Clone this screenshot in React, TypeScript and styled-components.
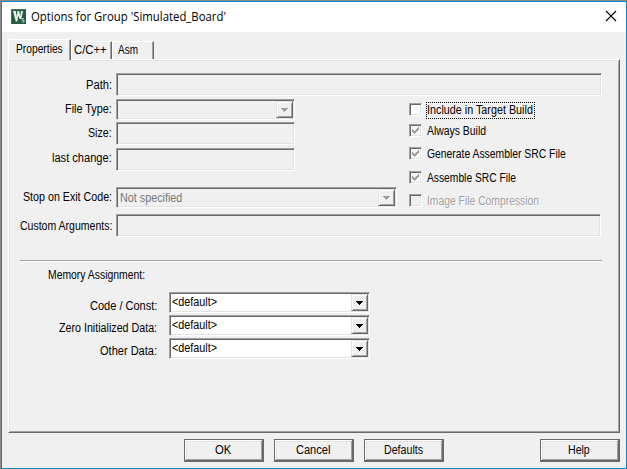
import React, { useLayoutEffect, useRef, useState } from "react";
import styled, { createGlobalStyle, css } from "styled-components";

const face = "#f0f0f0";
const light = "#e3e3e3";
const shadow = "#a0a0a0";
const dark = "#696969";

const GlobalStyle = createGlobalStyle`
  * { box-sizing: border-box; }
  body { margin: 0; overflow: hidden; }
`;

const sunken = css`
  border: 1px solid;
  border-color: ${shadow} #fff #fff ${shadow};
  box-shadow: inset 1px 1px 0 ${dark}, inset -1px -1px 0 ${light};
`;

const Window = styled.div`
  width: 627px;
  height: 469px;
  display: flex;
  flex-direction: column;
  border-style: solid;
  border-color: #8b8b8b;
  border-width: 1px 0 0 1px;
  background: ${face};
  font: 12px/14px "Liberation Sans", Arial, sans-serif;
  color: #000;
`;

const Frame = styled.div`
  flex: 1;
  display: flex;
  flex-direction: column;
  border: 1px solid #0a84cc;
`;

const TitleBar = styled.header`
  height: 30px;
  flex: none;
  display: flex;
  align-items: flex-start;
  background: #fff;
  padding: 7px 9px 0 9px;
`;

const Title = styled.h1`
  flex: 1;
  margin: 0 0 0 5px;
  font: 12px/16px "Open Sans", "Noto Sans", sans-serif;
`;

const CloseButton = styled.button`
  width: 12px;
  height: 12px;
  margin-top: 1px;
  padding: 0;
  border: 0;
  background: none;
  display: flex;
`;

const Content = styled.main`
  flex: 1;
  padding: 7px 6px 0;
  display: flex;
  flex-direction: column;
`;

const TabList = styled.div`
  height: 20px;
  display: flex;
  align-items: flex-end;
`;

const Tab = styled.div<{ $active?: boolean; $width: number; $pad: number }>`
  width: ${(p) => p.$width}px;
  height: ${(p) => (p.$active ? 21 : 18)}px;
  margin-bottom: ${(p) => (p.$active ? -1 : 0)}px;
  padding: ${(p) => (p.$active ? 2 : 1)}px 0 0 ${(p) => p.$pad}px;
  border-top: 1px solid #fff;
  border-left: 1px solid #fff;
  border-right: 1px solid ${dark};
  border-radius: 2px 1px 0 0;
  box-shadow: inset -1px 0 0 ${shadow};
  background: ${face};
  z-index: ${(p) => (p.$active ? 1 : 0)};
`;

const Panel = styled.section`
  height: 374px;
  flex: none;
  border: 1px solid;
  border-color: #fff ${dark} ${dark} #fff;
  box-shadow: inset 1px 1px 0 ${light}, inset -1px -1px 0 ${shadow};
  padding: 13px 17px 0 11px;
`;

const Columns = styled.div`
  display: flex;
  height: 115px;
`;

const Row = styled.div<{ $gap?: number }>`
  display: flex;
  margin-top: ${(p) => p.$gap ?? 0}px;
`;

const Label = styled.label<{ $width: number; $drop: number; $gap: number }>`
  width: ${(p) => p.$width}px;
  margin-right: ${(p) => p.$gap}px;
  flex: none;
  display: flex;
  justify-content: flex-end;
  padding-top: ${(p) => p.$drop}px;
`;

const Field = styled.div<{ $width: number }>`
  width: ${(p) => p.$width}px;
  height: 23px;
  ${sunken}
`;

const ComboBox = styled.div<{ $width: number; $disabled?: boolean }>`
  width: ${(p) => p.$width}px;
  height: 21px;
  display: flex;
  justify-content: space-between;
  padding: 1px 1px 1px ${(p) => (p.$disabled ? 3 : 2)}px;
  background: ${(p) => (p.$disabled ? face : "#fff")};
  color: ${(p) => (p.$disabled ? "#777" : "#000")};
  ${sunken}
`;

const ComboValue = styled.span<{ $drop: number }>`
  padding-top: ${(p) => p.$drop}px;
`;

const DropButton = styled.span`
  width: 17px;
  height: 17px;
  padding: 6px 0 0 4px;
  display: flex;
  align-items: flex-start;
  background: ${face};
  border: 1px solid;
  border-color: ${light} ${dark} ${dark} ${light};
  box-shadow: inset 1px 1px 0 #fff, inset -1px -1px 0 ${shadow};
`;

const CheckList = styled.div`
  margin-left: 12px;
  padding-top: 7px;
`;

const CheckRow = styled.label<{ $height: number; $disabled?: boolean }>`
  height: ${(p) => p.$height}px;
  display: flex;
  align-items: flex-start;
  ${(p) => p.$disabled && `color: ${shadow}; text-shadow: 1px 1px 0 #fff;`}
`;

const CheckBox = styled.span<{ $fill: string }>`
  width: 13px;
  height: 13px;
  display: flex;
  margin-right: 4px;
  background: ${(p) => p.$fill};
  ${sunken}
`;

const CheckText = styled.span<{ $focused?: boolean }>`
  height: 17px;
  margin-top: -1px;
  padding: 0 1px 0 0;
  border: 1px ${(p) => (p.$focused ? "dotted #000" : "solid transparent")};
`;

const Divider = styled.hr`
  width: 582px;
  height: 2px;
  margin: 23px 0 0;
  border: 0;
  border-top: 1px solid ${shadow};
  border-bottom: 1px solid #fff;
`;

const Heading = styled.div`
  margin: 6px 0 10px 28px;
  height: 14px;
`;

const Footer = styled.footer`
  display: flex;
  gap: 10px;
  padding: 6px 0 0 176px;
`;

const Button = styled.button<{ $far?: boolean }>`
  width: 80px;
  height: 23px;
  margin-left: ${(p) => (p.$far ? 86 : 0)}px;
  padding: 0 1px 1px 0;
  display: flex;
  align-items: center;
  justify-content: center;
  font: inherit;
  color: #000;
  background: ${face};
  border: 1px solid ${dark};
  border-right-width: 2px;
  border-bottom-width: 2px;
  box-shadow: inset 1px 1px 0 #fff, inset -1px -1px 0 ${shadow}, inset 2px 2px 0 ${light};
`;

const FitBox = styled.span`
  display: block;
  white-space: pre;
`;

const FitInner = styled.span`
  display: inline-block;
  transform-origin: 0 0;
`;

/** Condenses a run of text horizontally so that it spans the given width. */
function Fit({ w, children }: { w: number; children: string }) {
  const ref = useRef<HTMLSpanElement>(null);
  const [scale, setScale] = useState(1);
  useLayoutEffect(() => {
    if (ref.current) setScale(w / ref.current.offsetWidth);
  }, [w]);
  return (
    <FitBox style={{ width: w }}>
      <FitInner ref={ref} style={{ transform: `scaleX(${scale})` }}>{children}</FitInner>
    </FitBox>
  );
}

const Arrow = ({ disabled }: { disabled?: boolean }) => (
  <svg width="8" height="5" viewBox="0 0 8 5" shapeRendering="crispEdges">
    {disabled && <path d="M1 1h7v1h-1v1h-1v1h-1v1h-1v-1z" fill="#fff" />}
    <path d="M0 0h7v1h-1v1h-1v1h-1v1h-1v-1h-1v-1h-1v-1h-1z" fill={disabled ? shadow : "#000"} />
  </svg>
);

const Tick = () => (
  <svg width="11" height="11" viewBox="0 0 11 11" shapeRendering="crispEdges">
    <path d="M2 4h1v1h1v1h1v-1h1v-1h1v-1h1v-1h1v3h-1v1h-1v1h-1v1h-1v1h-1v-1h-1v-1h-1z" fill={shadow} />
  </svg>
);

const Logo = () => (
  <svg width="15" height="15" viewBox="0 0 15 15">
    <rect width="15" height="15" fill="#285b42" />
    <path d="M0 0h15v1H1v14H0z" fill="#47745d" />
    <path d="M2 2h2.8l.9 5.5L6.5 2h1.8l.9 5.5L10 2h2l-1.7 8H8.600L7.300 6.500 6.300 12.500H4.800z" fill="#eaf2ed" />
    <path d="M13 9.500h-2v1.700h2V13h-2.200" fill="none" stroke="#c9dcd0" strokeWidth=".8" />
  </svg>
);

type Combo = { width: number; value?: string; valueWidth?: number; disabled?: boolean };

const Select = ({ width, value, valueWidth = 0, disabled }: Combo) => (
  <ComboBox $width={width} $disabled={disabled}>
    <ComboValue $drop={disabled ? 2 : 1}>{value && <Fit w={valueWidth}>{value}</Fit>}</ComboValue>
    <DropButton><Arrow disabled={disabled} /></DropButton>
  </ComboBox>
);

const checks = [
  { text: "Include in Target Build", w: 106, h: 21, focused: true, fill: "#fff" },
  { text: "Always Build", w: 59, h: 23, ticked: true, fill: "#f8f8f8" },
  { text: "Generate Assembler SRC File", w: 139, h: 24, ticked: true, fill: "#f8f8f8" },
  { text: "Assemble SRC File", w: 89, h: 23, ticked: true, fill: "#f8f8f8" },
  { text: "Image File Compression", w: 112, h: 17, disabled: true, fill: face },
];

const memory = [
  { text: "Code / Const:", w: 67, drop: 7 },
  { text: "Zero Initialized Data:", w: 98, drop: 6 },
  { text: "Other Data:", w: 57, drop: 6 },
];

type FieldLabelProps = { text: string; w: number; drop: number; width?: number; gap?: number };

const FieldLabel = ({ text, w, drop, width = 92, gap = 4 }: FieldLabelProps) => (
  <Label $width={width} $drop={drop} $gap={gap}><Fit w={w}>{text}</Fit></Label>
);

export default function App() {
  return (
    <Window>
      <GlobalStyle />
      <Frame>
        <TitleBar>
          <Logo />
          <Title><Fit w={195}>Options for Group 'Simulated_Board'</Fit></Title>
          <CloseButton aria-label="Close">
            <svg width="12" height="12" viewBox="0 0 12 12">
              <path d="M1 1l10 10M11 1L1 11" stroke="#000" strokeWidth="1.1" />
            </svg>
          </CloseButton>
        </TitleBar>
        <Content>
          <TabList>
            <Tab $active $width={63} $pad={7}><Fit w={47}>Properties</Fit></Tab>
            <Tab $width={41} $pad={2}><Fit w={33}>C/C++</Fit></Tab>
            <Tab $width={42} $pad={5}><Fit w={20}>Asm</Fit></Tab>
          </TabList>
          <Panel>
            <Row>
              <FieldLabel text="Path:" w={26} drop={5} />
              <Field $width={486} />
            </Row>
            <Columns>
              <div>
                <Row $gap={3}>
                  <FieldLabel text="File Type:" w={47} drop={3} />
                  <Select width={179} disabled />
                </Row>
                <Row $gap={2}>
                  <FieldLabel text="Size:" w={24} drop={4} />
                  <Field $width={179} />
                </Row>
                <Row $gap={3}>
                  <FieldLabel text="last change:" w={60} drop={3} />
                  <Field $width={179} />
                </Row>
                <Row $gap={16}>
                  <FieldLabel text="Stop on Exit Code:" w={89} drop={3} />
                  <Select width={281} value="Not specified" valueWidth={62} disabled />
                </Row>
              </div>
              <CheckList>
                {checks.map((c) => (
                  <CheckRow key={c.text} $height={c.h} $disabled={c.disabled}>
                    <CheckBox $fill={c.fill}>{c.ticked && <Tick />}</CheckBox>
                    <CheckText $focused={c.focused}><Fit w={c.w}>{c.text}</Fit></CheckText>
                  </CheckRow>
                ))}
              </CheckList>
            </Columns>
            <Row $gap={3}>
              <FieldLabel text="Custom Arguments:" w={92} drop={5} />
              <Field $width={485} />
            </Row>
            <Divider />
            <Heading><Fit w={97}>Memory Assignment:</Fit></Heading>
            {memory.map((m, i) => (
              <Row key={m.text} $gap={i ? 2 : 0}>
                <FieldLabel text={m.text} w={m.w} drop={m.drop} width={137} gap={12} />
                <Select width={201} value="<default>" valueWidth={45} />
              </Row>
            ))}
          </Panel>
          <Footer>
            <Button><Fit w={16}>OK</Fit></Button>
            <Button><Fit w={34}>Cancel</Fit></Button>
            <Button><Fit w={39}>Defaults</Fit></Button>
            <Button $far><Fit w={22}>Help</Fit></Button>
          </Footer>
        </Content>
      </Frame>
    </Window>
  );
}
